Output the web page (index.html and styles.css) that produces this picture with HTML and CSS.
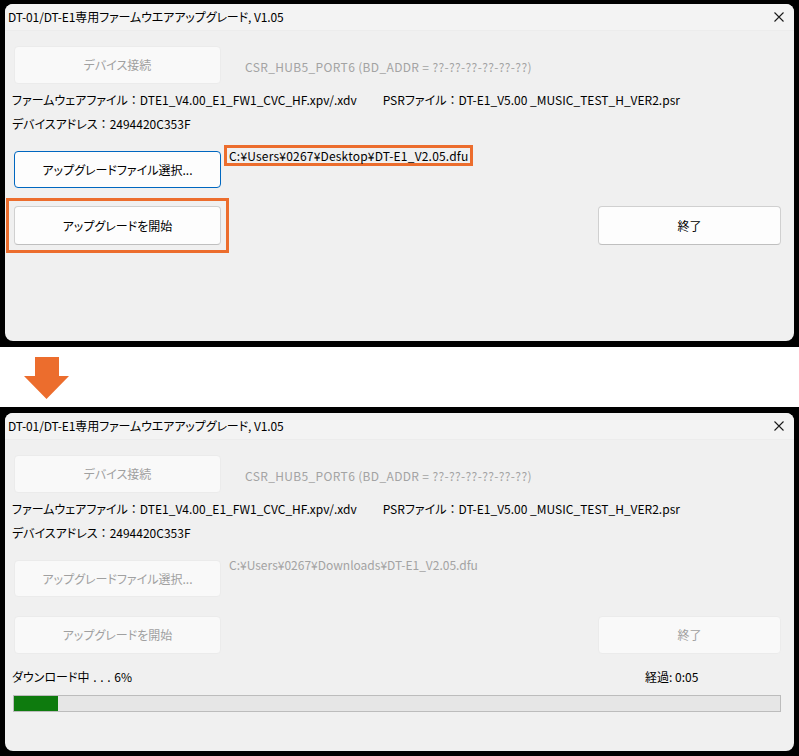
FILE: index.html
```html
<!DOCTYPE html>
<html lang="ja">
<head>
<meta charset="utf-8">
<title>DT-01/DT-E1 Firmware Upgrade</title>
<link rel="stylesheet" href="styles.css">
</head>
<body>
<div class="frame frame-top">
  <div class="window">
    <div class="titlebar">
      <span class="title">DT-01/DT-E1専用ファームウエアアップグレード, V1.05</span>
      <svg class="close" width="10" height="10" viewBox="0 0 10 10"><path d="M0.5 0.5 L9.5 9.5 M9.5 0.5 L0.5 9.5" stroke="#1b1b1b" stroke-width="1.1" fill="none"/></svg>
    </div>
    <div class="content">
      <div class="row row-device">
        <button class="btn btn-device disabled">デバイス接続</button>
        <span class="csr">CSR_HUB5_PORT6 (BD_ADDR = ??-??-??-??-??-??)</span>
      </div>
      <div class="info info-fw"><span class="fw">ファームウェアファイル<span class="colon">：</span>DTE1_V4.00_E1_FW1_CVC_HF.xpv/.xdv</span><span class="psr">PSRファイル<span class="colon">：</span>DT-E1_V5.00 _MUSIC_TEST_H_VER2.psr</span></div>
      <div class="info info-addr">デバイスアドレス<span class="colon">：</span>2494420C353F</div>
      <div class="row row-file">
        <button class="btn btn-file focus">アップグレードファイル選択...</button>
        <span class="path boxed">C:¥Users¥0267¥Desktop¥DT-E1_V2.05.dfu</span>
      </div>
      <div class="row row-start">
        <span class="marked"><button class="btn btn-start">アップグレードを開始</button></span>
        <button class="btn btn-end">終了</button>
      </div>
    </div>
  </div>
</div>
<div class="arrow-area">
  <svg class="arrow" width="45" height="42" viewBox="0 0 45 42"><path d="M11 0 H35 V19 H45 L22.5 42 L0 19 H11 Z" fill="#ec6d2d"/></svg>
</div>
<div class="frame frame-bottom">
  <div class="window">
    <div class="titlebar">
      <span class="title">DT-01/DT-E1専用ファームウエアアップグレード, V1.05</span>
      <svg class="close" width="10" height="10" viewBox="0 0 10 10"><path d="M0.5 0.5 L9.5 9.5 M9.5 0.5 L0.5 9.5" stroke="#1b1b1b" stroke-width="1.1" fill="none"/></svg>
    </div>
    <div class="content">
      <div class="row row-device">
        <button class="btn btn-device disabled">デバイス接続</button>
        <span class="csr">CSR_HUB5_PORT6 (BD_ADDR = ??-??-??-??-??-??)</span>
      </div>
      <div class="info info-fw"><span class="fw">ファームウェアファイル<span class="colon">：</span>DTE1_V4.00_E1_FW1_CVC_HF.xpv/.xdv</span><span class="psr">PSRファイル<span class="colon">：</span>DT-E1_V5.00 _MUSIC_TEST_H_VER2.psr</span></div>
      <div class="info info-addr">デバイスアドレス<span class="colon">：</span>2494420C353F</div>
      <div class="row row-file">
        <button class="btn btn-file disabled">アップグレードファイル選択...</button>
        <span class="path muted">C:¥Users¥0267¥Downloads¥DT-E1_V2.05.dfu</span>
      </div>
      <div class="row row-start">
        <button class="btn btn-start disabled">アップグレードを開始</button>
        <button class="btn btn-end disabled">終了</button>
      </div>
      <div class="status">
        <span class="progress-text">ダウンロード中 . . . 6%</span>
        <span class="elapsed">経過: 0:05</span>
      </div>
      <div class="progress"><div class="progress-fill" style="width:5.8%"></div></div>
    </div>
  </div>
</div>
</body>
</html>
```

FILE: styles.css
```css
* { box-sizing: border-box; }
html, body { margin: 0; padding: 0; }
body {
  width: 799px;
  height: 756px;
  overflow: hidden;
  background: #ffffff;
  font-family: "Noto Sans CJK JP", "Noto Sans", sans-serif;
  font-size: 12px;
  color: #000;
  font-feature-settings: "palt";
}
.frame { background: #000; padding: 4px 5px 6px 5px; }
.frame-bottom { padding: 6px 5px 5px 5px; }
.window {
  background: #f0f0f0;
  border-radius: 8px;
  height: 337px;
  overflow: hidden;
  display: flex;
  flex-direction: column;
}
.frame-bottom .window { height: 338px; }
.titlebar {
  height: 27px;
  flex: none;
  background: #f3f3f3;
  border-bottom: 1px solid #ececec;
  display: flex;
  align-items: center;
  justify-content: space-between;
  padding: 0 10px 0 3px;
}
.title { font-size: 12px; line-height: 16px; letter-spacing: -0.1px; }
.close { display: block; margin-top: -1px; }
.content { padding: 0 13px 0 7px; }
.row { display: flex; }
.btn {
  font-family: inherit;
  font-size: 12px;
  font-feature-settings: "palt";
  color: #000;
  background: #fdfdfd;
  border: 1px solid #d0d0d0;
  border-bottom-color: #bfbfbf;
  border-radius: 4px;
  padding: 0;
  margin: 0 0 0 2px;
  width: 207px;
  height: 38px;
  line-height: 16px;
}
.btn.disabled {
  color: #a0a0a0;
  background: #f9f9f9;
  border-color: #ebebeb;
}
.btn.focus { border: 1px solid #0067c0; background: #fdfdfd; }
.marked { position: relative; display: flex; }
.marked::after {
  content: "";
  position: absolute;
  left: -6px;
  top: -8px;
  right: -8px;
  bottom: -8px;
  border: 3px solid #ec6d2d;
  pointer-events: none;
}
.colon { font-feature-settings: normal; }
.row-device { margin-top: 15px; align-items: center; }
.csr { color: #a3a3a3; margin-left: 24px; margin-top: 4px; line-height: 16px; letter-spacing: 0.35px; }
.info { line-height: 16px; height: 16px; display: flex; }
.info-fw { margin-top: 8px; }
.info-addr { margin-top: 8px; }
.psr { margin-left: 26px; }
.row-file { margin-top: 13px; align-items: flex-start; height: 43px; }
.btn-file { margin-top: 6px; height: 37px; }
.path {
  margin-left: 3px;
  border: 3px solid transparent;
  padding: 0 2px;
  height: 21px;
  line-height: 15px;
  letter-spacing: 0.2px;
}
.path.boxed { border-color: #ec6d2d; }
.path.muted { color: #a3a3a3; letter-spacing: 0; }
.row-start { margin-top: 18px; }
.btn-start { height: 39px; }
.btn-end { margin-left: auto; width: 183px; height: 39px; }
.frame-bottom .row-start { margin-top: 19px; }
.frame-bottom .btn-start, .frame-bottom .btn-end { height: 38px; }
.status {
  display: grid;
  grid-template-columns: 633px auto;
  margin-top: 15px;
  line-height: 16px;
}
.progress-text { word-spacing: 1px; }
.progress {
  margin: 10px 0 0 1px;
  height: 17px;
  border: 1px solid #bcbcbc;
  background: #e6e6e6;
}
.progress-fill { height: 100%; background: #0e7b0e; }
.arrow-area { height: 60px; padding: 10px 0 0 24px; }
.arrow { display: block; }
```
